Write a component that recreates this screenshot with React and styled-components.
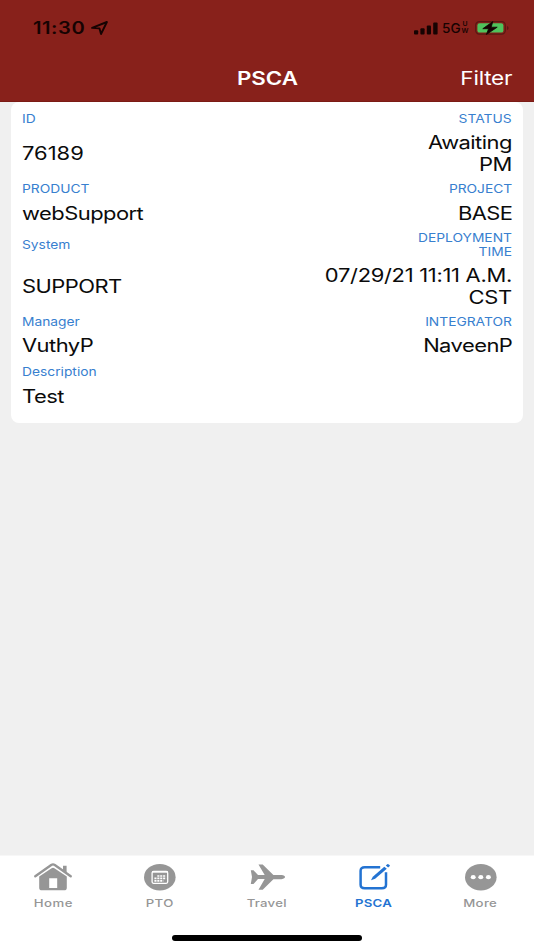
import styled, { createGlobalStyle } from 'styled-components';

const GlobalStyle = createGlobalStyle`
  * {
    box-sizing: border-box;
  }
  body {
    margin: 0;
    font-family: Inter, "Liberation Sans", sans-serif;
    background-color: #f0f0f0;
  }
`;

const Screen = styled.div`
  display: flex;
  flex-direction: column;
  height: 950px;
  overflow: hidden;
  background-color: #f0f0f0;
`;

// wide lettering: the text grows sideways from the given edge
const Text = styled.span`
  display: inline-block;
  white-space: pre-line;
  letter-spacing: ${props => props.$tracking || 0}px;
  transform: scaleX(${props => props.$stretch || 1.2});
  transform-origin: ${props => props.$from || 'left'} center;
`;

const Header = styled.header`
  height: 102px;
  background-color: #88211b;
  border-bottom: 1px solid #7b1b15;
`;

const StatusBar = styled.div`
  display: flex;
  align-items: center;
  justify-content: space-between;
  height: 56px;
  padding: 0 25px 0 33px;
  color: #160302;
`;

const Clock = styled.div`
  display: flex;
  align-items: center;
  gap: 14px;
  font-size: 16.8px;
  font-weight: 600;
`;

const Signals = styled.div`
  display: flex;
  align-items: center;
`;

const Network = styled.div`
  display: flex;
  align-items: center;
  width: 28px;
  margin: 0 5px 0 4px;
  font-size: 13.6px;
  font-weight: 500;
`;

const NetworkBand = styled.div`
  display: flex;
  flex-direction: column;
  align-items: center;
  width: 7px;
  margin-left: 1px;
  font-size: 6.8px;
  font-weight: 600;
  line-height: 6.8px;
`;

const NavBar = styled.div`
  display: grid;
  grid-template-columns: 1fr auto 1fr;
  align-items: center;
  height: 44px;
  padding: 0 22px;
  color: white;
`;

const Title = styled.div`
  grid-column: 2;
  font-size: 18.6px;
  font-weight: 600;
`;

const FilterButton = styled.button`
  justify-self: end;
  padding: 0;
  border: none;
  background: none;
  color: inherit;
  font: inherit;
  font-size: 18.8px;
`;

const Main = styled.main`
  flex: 1;
  padding: 0 11px;
`;

const Card = styled.section`
  display: grid;
  grid-template-columns: 1fr 1fr;
  grid-template-rows: 16px 54px 16px 34px 28px 56px 14px 34px 18px 32px;
  align-items: center;
  height: 320.5px;
  padding: 8px 11px 10px;
  border-radius: 8px;
  background-color: white;
`;

const Label = styled.div`
  padding-top: 3px;
  text-align: ${props => props.$align};
  color: #3880cf;
  font-size: 11.6px;
  line-height: 13.5px;
`;

const Value = styled.div`
  text-align: ${props => props.$align};
  color: #0b0b0b;
  font-size: 18.3px;
  line-height: 22px;
`;

const TabBar = styled.nav`
  display: grid;
  grid-template-columns: repeat(5, 1fr);
  height: 80px;
  padding-top: 7px;
  background-color: white;
  border-top: 1px solid #f7f7f7;
`;

const Tab = styled.a`
  display: flex;
  flex-direction: column;
  align-items: center;
  gap: 5px;
  color: ${props => (props.$active ? '#2373d2' : '#969696')};
  font-size: 11px;
  font-weight: ${props => (props.$active ? 600 : 500)};
  line-height: 14px;

  svg {
    display: block;
  }
`;

const HomeArea = styled.div`
  display: flex;
  justify-content: center;
  height: 15px;
  background-color: white;
`;

const HomeIndicator = styled.div`
  width: 190px;
  height: 6px;
  border-radius: 3px;
  background-color: black;
`;

const LocationIcon = () => (
  <svg width="17" height="14" viewBox="0 0 17 14" fill="none" stroke="currentColor" strokeWidth="1.9" strokeLinejoin="round">
    <path d="M1.1 6.9 15.9 1 10 13 8.5 7.4z" />
  </svg>
);

const SignalIcon = () => (
  <svg width="24" height="13" viewBox="0 0 24 13" fill="currentColor">
    <rect x="0" y="8.3" width="4.2" height="4.2" rx="1" />
    <rect x="6.4" y="6.3" width="4.2" height="6.2" rx="1" />
    <rect x="12.8" y="3.6" width="4.2" height="8.9" rx="1" />
    <rect x="19.2" y="0.4" width="4.4" height="12.1" rx="1" />
  </svg>
);

const BatteryIcon = () => (
  <svg width="34" height="14" viewBox="0 0 34 14">
    <rect x="0.7" y="0.7" width="29.6" height="12.4" rx="3.6" fill="none" stroke="#5a1813" strokeWidth="1.2" />
    <rect x="2.4" y="2.2" width="26" height="9.4" rx="2.2" fill="#4fc35c" />
    <path d="M17.8 0.6 7.8 7.7h5.8l-2.2 5.8L22.2 6.2h-6z" fill="#120504" stroke="#120504" strokeWidth="0.8" strokeLinejoin="round" />
    <path d="M32 4.9q1.6.7 1.6 2t-1.6 2z" fill="#5a1813" />
  </svg>
);

const HomeIcon = () => (
  <svg width="38" height="28" viewBox="0 0 38 28" fill="currentColor">
    <path d="M1.3 13.2 17.2 1.9q1.8-1.1 3.6 0L36.7 13.2" fill="none" stroke="currentColor" strokeWidth="2.4" strokeLinecap="round" />
    <path d="M29 2.8h3.6v7.5L29 7.8z" />
    <path fillRule="evenodd" d="M5.2 13.5 17.6 5.2q1.4-.8 2.8 0l12.4 8.3v11.2q0 2.6-2.8 2.6H8q-2.8 0-2.8-2.6zM15.2 15.3v9.6h8V15.3z" />
  </svg>
);

const CalendarIcon = () => (
  <svg width="32" height="28" viewBox="0 0 32 28">
    <ellipse cx="15.8" cy="14.2" rx="15.8" ry="13.2" fill="currentColor" />
    <rect x="8.1" y="8.5" width="15.6" height="11.8" rx="1.5" fill="none" stroke="white" strokeWidth="1.3" />
    <path d="M8.1 8.8h15.6" stroke="white" strokeWidth="1.6" />
    <path d="M13.3 13h8.8M10.4 15.4h11.7M10.4 17.9h9" stroke="white" strokeWidth="1.6" strokeDasharray="2.1 0.8" />
  </svg>
);

const PlaneIcon = () => (
  <svg width="36" height="28" viewBox="-1 0 36 28" fill="currentColor">
    <path d="M.8 7.2h2.7l4.5 4.9h6.7L8.5 1.5h4.2L23.4 12h8.1q3.5.5 3.5 2.1t-3.5 2.1h-8.1L12.7 26.8H8.5l6.2-10.7H8L3.5 21H.8l1.2-6.9z" />
  </svg>
);

const EditIcon = () => (
  <svg width="34" height="28" viewBox="0 0 34 28" fill="none" stroke="currentColor">
    <path d="M23.2 4.3H7.7Q3.6 4.3 3.6 7.8v14q0 3.5 4.1 3.5h17.2q4.1 0 4.1-3.5V9.3" strokeWidth="2.5" />
    <path d="m14 17.3 1.8-3.5L27.3 3.7l2.5 2L18.1 15.7z" fill="currentColor" stroke="none" />
    <path d="m28.8 2.6 1.5-1.3q.7-.5 1.4.1l.9.7q.6.6 0 1.2L31.1 4.6z" fill="currentColor" stroke="none" />
  </svg>
);

const MoreIcon = () => (
  <svg width="32" height="28" viewBox="0 0 32 28">
    <ellipse cx="15.8" cy="14.2" rx="15.8" ry="13.2" fill="currentColor" />
    <g fill="white">
      <ellipse cx="8.2" cy="14.2" rx="2.5" ry="2.1" />
      <ellipse cx="15.8" cy="14.2" rx="2.5" ry="2.1" />
      <ellipse cx="23.4" cy="14.2" rx="2.5" ry="2.1" />
    </g>
  </svg>
);

const fields = [
  ['ID', '76189', 'STATUS', 'Awaiting\nPM'],
  ['PRODUCT', 'webSupport', 'PROJECT', 'BASE'],
  ['System', 'SUPPORT', 'DEPLOYMENT\nTIME', '07/29/21 11:11 A.M.\nCST'],
  ['Manager', 'VuthyP', 'INTEGRATOR', 'NaveenP'],
  ['Description', 'Test', '', ''],
];

const tabs = [
  { name: 'Home', Icon: HomeIcon, tracking: 0.4 },
  { name: 'PTO', Icon: CalendarIcon, tracking: 0.4 },
  { name: 'Travel', Icon: PlaneIcon, tracking: 0.2 },
  { name: 'PSCA', Icon: EditIcon, tracking: 0.2, active: true },
  { name: 'More', Icon: MoreIcon, tracking: 0.3 },
];

// plain numbers keep their normal spacing, words are set tighter
const getTracking = value => {
  if (/^\d+$/.test(value)) return 0;
  return /\d/.test(value) ? -0.25 : -0.45;
};

function FieldRow({ field }) {
  const [leftLabel, leftValue, rightLabel, rightValue] = field;
  return (
    <>
      <Label $align="left"><Text $stretch={1.19}>{leftLabel}</Text></Label>
      <Label $align="right"><Text $stretch={1.19} $from="right">{rightLabel}</Text></Label>
      <Value $align="left"><Text $tracking={getTracking(leftValue)}>{leftValue}</Text></Value>
      <Value $align="right">
        <Text $from="right" $tracking={getTracking(rightValue)}>{rightValue}</Text>
      </Value>
    </>
  );
}

function App() {
  return (
    <>
      <GlobalStyle />
      <Screen>
        <Header>
          <StatusBar>
            <Clock>
              <Text $tracking={0.45}>11:30</Text>
              <LocationIcon />
            </Clock>
            <Signals>
              <SignalIcon />
              <Network>
                <Text $stretch={1}>5G</Text>
                <NetworkBand><span>U</span><span>W</span></NetworkBand>
              </Network>
              <BatteryIcon />
            </Signals>
          </StatusBar>
          <NavBar>
            <Title><Text $from="center">PSCA</Text></Title>
            <FilterButton><Text $from="right" $tracking={-0.2}>Filter</Text></FilterButton>
          </NavBar>
        </Header>
        <Main>
          <Card>
            {fields.map(field => <FieldRow key={field[0]} field={field} />)}
          </Card>
        </Main>
        <TabBar>
          {tabs.map(({ name, Icon, tracking, active }) => (
            <Tab key={name} $active={active}>
              <Icon />
              <Text $from="center" $tracking={tracking}>{name}</Text>
            </Tab>
          ))}
        </TabBar>
        <HomeArea><HomeIndicator /></HomeArea>
      </Screen>
    </>
  );
}

export default App;
